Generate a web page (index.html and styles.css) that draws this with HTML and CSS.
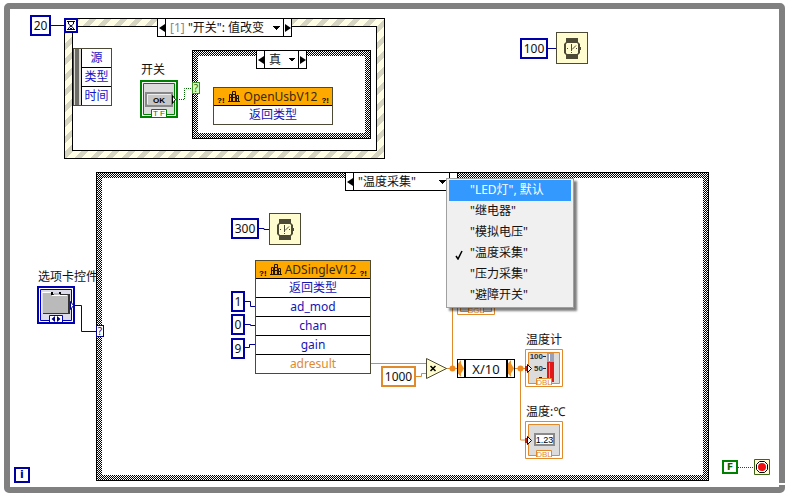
FILE: index.html
```html
<!DOCTYPE html>
<html lang="zh-CN">
<head>
<meta charset="utf-8">
<meta name="viewport" content="width=device-width, initial-scale=1">
<title>程序框图</title>
<link rel="stylesheet" href="styles.css">
</head>
<body>
<svg class="defs" aria-hidden="true">
  <symbol id="watch" viewBox="0 0 30 30">
    <path fill="#4c4a35" d="M9 5h12v21H9z"/>
    <path fill="#4c4a35" d="M9 9h12l2 2v3h1v3h-1v3l-2 2H9l-2-2v-9z"/>
    <path fill="#fffdd0" d="M10 10h10l1 1v9l-1 1H10l-1-1v-9z"/>
    <path fill="none" stroke="#4c4a35" d="M14.500 11v7M15 16.500l4-4M10 15.500h1M19 15.500h1M14 19.500h1"/>
  </symbol>
  <symbol id="library" viewBox="0 0 12 11">
    <path fill="none" stroke="#241600" d="M1.500 10V3.500h2V10M4.500 10V.5h3V10M8.500 10V4.500h2V10M0 10.500h12M1 6.500h3M4 3.500h4M4 6.500h4M8 7.500h3"/>
  </symbol>
</svg>

<main class="diagram">
  <div class="loop"></div>

  <section class="event">
    <div class="event-body"></div>
  </section>
  <div class="selector event-selector">
    <button class="step prev" aria-label="上一个事件"></button>
    <button class="current"><span class="index">[1]</span> "开关": 值改变</button>
    <button class="step next" aria-label="下一个事件"></button>
  </div>
  <ul class="event-data">
    <li>源</li>
    <li>类型</li>
    <li>时间</li>
  </ul>

  <section class="case case-true"><div class="case-body"></div></section>
  <div class="selector true-selector">
    <button class="step prev" aria-label="上一个分支"></button>
    <select class="current" aria-label="条件分支"><option>真</option><option>假</option></select>
    <button class="step next" aria-label="下一个分支"></button>
  </div>

  <section class="case case-tabs"><div class="case-body"></div></section>
  <div class="selector tabs-selector">
    <button class="step prev" aria-label="上一个选项卡"></button>
    <button class="current" aria-haspopup="menu" aria-expanded="true">"温度采集"</button>
    <button class="step next" aria-label="下一个选项卡"></button>
  </div>

  <svg class="wires" aria-hidden="true">
    <g stroke="#00008c">
      <path d="M50 25.500h16M547 48.500h10M258 228.500h6v1h6M72 305.500h9.500v26h16M244 301.500h6.500v5h5M244 324.500h6.500v1h5M244 347.500h5.500v-3h6"/>
    </g>
    <path stroke="#006400" stroke-dasharray="1 1" d="M177 99.500h7.500v-11h9M738 467.500h16"/>
    <g stroke="#e08a2c">
      <path d="M371 363.500h56"/>
      <path d="M414 376.500h7.500v-3h6M446 368.500h12M452.500 368v-62M514 368.500h14M520.500 368v72h7"/>
    </g>
    <g fill="#f08a20"><circle cx="452.500" cy="368.500" r="3"/><circle cx="520.500" cy="368.500" r="3"/></g>
  </svg>

  <span class="tunnel tunnel-true">?</span>
  <span class="tunnel tunnel-tabs">?</span>

  <input class="constant c-20" value="20" aria-label="超时">
  <input class="constant c-100" value="100" aria-label="循环等待">
  <input class="constant c-300" value="300" aria-label="采集等待">
  <input class="constant c-1" value="1" aria-label="ad_mod 值">
  <input class="constant c-0" value="0" aria-label="chan 值">
  <input class="constant c-9" value="9" aria-label="gain 值">
  <input class="constant double c-1000" value="1000" aria-label="系数">

  <svg class="timeout" viewBox="0 0 14 15" aria-hidden="true">
    <path fill="#fff" stroke="#0000a8" stroke-width="2" d="M1 1h12v13H1z"/>
    <path fill="none" stroke="#000040" d="M3 3.500h8M3 11.500h8M4.500 4v2l5 4v1M9.500 4v2l-5 4v1M6 10.500h2"/>
  </svg>
  <svg class="watch watch-loop" aria-hidden="true"><use href="#watch"/></svg>
  <svg class="watch watch-sample" aria-hidden="true"><use href="#watch"/></svg>

  <span class="label l-switch">开关</span>
  <svg class="terminal t-switch" viewBox="0 0 38 38" aria-hidden="true">
    <path fill="#fff" stroke="#008000" stroke-width="2" d="M1 1h36v36H1z"/>
    <path fill="#dcdcdc" stroke="#008000" d="M3.500 3.500h31v31h-31z"/>
    <path fill="#c6c6c6" stroke="#888" stroke-width="2" d="M6 13h26v13H6z"/>
    <path fill="none" stroke="#eee" d="M7.500 24v-9.500H31"/>
    <text class="glyph" x="19" y="23" text-anchor="middle">OK</text>
    <path fill="#fff" stroke="#000" d="M32.500 15.500v8l3-4z"/>
    <path fill="#fff" stroke="#008000" d="M11.500 37V29.500h15V37"/>
    <text class="tag green" x="19" y="36" text-anchor="middle">T F</text>
  </svg>

  <span class="label l-tabs">选项卡控件</span>
  <svg class="terminal t-tabs" viewBox="0 0 38 38" aria-hidden="true">
    <path fill="#fff" stroke="#0000b4" stroke-width="2" d="M1 1h36v36H1z"/>
    <path fill="#dcdcea" stroke="#0000b4" d="M3.500 3.500h31v31h-31z"/>
    <path fill="#333" d="M6 8h27v20H6z"/>
    <path fill="#bababa" d="M5 6h9v3h3V7h6v2h8v18H5z"/>
    <path fill="none" stroke="#fff" d="M5 27V6.500h9M15 9.500h15"/>
    <path fill="#000" d="M14 6h2v3h-2zM22 6h2v2h-2z"/>
    <path fill="#fff" stroke="#000080" d="M33.500 15.500v8l3-4z"/>
    <path fill="#fff" stroke="#0000b4" d="M12.500 36V29.500h13V36"/>
    <path fill="#000080" d="M18 30v6l-3.500-3zM20 30v6l3.500-3z"/>
  </svg>

  <article class="node n-open">
    <h2><span class="error">?!</span><svg class="lib" aria-hidden="true"><use href="#library"/></svg><span class="name">OpenUsbV12</span><span class="error">?!</span></h2>
    <p>返回类型</p>
  </article>

  <article class="node n-adc">
    <h2><span class="error">?!</span><svg class="lib" aria-hidden="true"><use href="#library"/></svg><span class="name">ADSingleV12</span><span class="error">?!</span></h2>
    <p>返回类型</p>
    <p>ad_mod</p>
    <p>chan</p>
    <p>gain</p>
    <p class="out">adresult</p>
  </article>

  <svg class="multiply" viewBox="0 0 22 22" aria-hidden="true">
    <path fill="#fffdd0" stroke="#4c4a35" d="M.5.500v20l20-10z"/>
    <path fill="none" stroke="#000" stroke-width="1.500" d="M4.500 8l5 5M9.500 8l-5 5"/>
  </svg>

  <div class="express">X/10</div>

  <svg class="terminal t-single" viewBox="0 0 38 38" aria-hidden="true">
    <path fill="#fff" stroke="#e08a2c" d="M.5.500h37v37H.5z"/>
    <path fill="#dcdcdc" stroke="#e08a2c" d="M3.500 3.500h31v31h-31z"/>
    <path fill="#fff" stroke="#e08a2c" d="M11.500 36V29.500h15V36"/>
    <text class="tag orange" x="19" y="36" text-anchor="middle">SGL</text>
  </svg>

  <span class="label l-thermo">温度计</span>
  <svg class="terminal t-thermo" viewBox="0 0 38 38" aria-hidden="true">
    <path fill="#fff" stroke="#e08a2c" d="M.5.500h37v37H.5z"/>
    <path fill="#dcdcdc" stroke="#e08a2c" d="M3.500 3.500h31v31h-31z"/>
    <path fill="#9aa0b8" d="M22 4h7v9h-7z"/><path fill="#e01818" d="M22 13h7v20h-7z"/>
    <path stroke="#ff9090" d="M24.500 14v18"/><path stroke="#fff" d="M24.500 5v7"/>
    <text class="scale" x="18" y="10" text-anchor="end">100</text>
    <text class="scale" x="18" y="22" text-anchor="end">50</text>
    <path stroke="#222" d="M18 7.500h3M18 19.500h3M14 28.500h3"/>
    <path fill="#fff" stroke="#e08a2c" d="M11.500 36V29.500h15V36"/>
    <text class="tag orange" x="19" y="36" text-anchor="middle">DBL</text>
    <path fill="#c02010" d="M0 17h3v5H0z"/><path fill="#fff" stroke="#000" d="M2.500 15.500v8l4-4z"/>
  </svg>

  <span class="label l-value">温度:℃</span>
  <svg class="terminal t-value" viewBox="0 0 38 38" aria-hidden="true">
    <path fill="#fff" stroke="#e08a2c" d="M.5.500h37v37H.5z"/>
    <path fill="#dcdcdc" stroke="#e08a2c" d="M3.500 3.500h31v31h-31z"/>
    <path fill="#fff" stroke="#8a8a8a" stroke-width="2" d="M10 13h19v11H10z"/>
    <text class="reading" x="19.500" y="22" text-anchor="middle">1.23</text>
    <path fill="#fff" stroke="#e08a2c" d="M11.500 36V29.500h15V36"/>
    <text class="tag orange" x="19" y="36" text-anchor="middle">DBL</text>
    <path fill="#c02010" d="M0 17h3v5H0z"/><path fill="#fff" stroke="#000" d="M2.500 15.500v8l4-4z"/>
  </svg>

  <span class="iteration">i</span>
  <span class="bool">F</span>
  <svg class="stop" viewBox="0 0 16 16" aria-hidden="true">
    <path fill="#fffdd0" stroke="#3c6414" d="M.5.500h15v15H.5z"/>
    <path fill="#fff" stroke="#000" d="M5.500 2.500h5l3 3v5l-3 3h-5l-3-3v-5z"/>
    <circle cx="8" cy="8" r="4" fill="#f01010"/>
  </svg>

  <div class="menu" role="menu">
    <button role="menuitemradio" aria-checked="false" class="active">"LED灯", 默认</button>
    <button role="menuitemradio" aria-checked="false">"继电器"</button>
    <button role="menuitemradio" aria-checked="false">"模拟电压"</button>
    <button role="menuitemradio" aria-checked="true"><svg class="check" viewBox="0 0 8 10" aria-hidden="true"><path fill="none" stroke="#000" stroke-width="1.500" d="M1 6l2 3 4-8"/></svg>"温度采集"</button>
    <button role="menuitemradio" aria-checked="false">"压力采集"</button>
    <button role="menuitemradio" aria-checked="false">"避障开关"</button>
  </div>
</main>
</body>
</html>
```
FILE: styles.css
```css
* { box-sizing: border-box; }

body {
  margin: 0;
  background: #fff;
  color: #111;
  font: 12px/16px "Noto Sans", "Noto Sans CJK SC", sans-serif;
}

button, input, select { font: inherit; color: inherit; }
h2, p, ul { margin: 0; padding: 0; font: inherit; }
.defs { position: absolute; width: 0; height: 0; }

/* Canvas: every node below has a free position on it. */
.diagram { position: relative; min-height: 100vh; overflow: hidden; }
.diagram > * { position: absolute; }

.loop {
  inset: 3px 3px 4px 4px;
  border: 6px solid #808080;
  border-radius: 5px;
}
/* Gap above the resize corner */
.loop::after {
  content: "";
  position: absolute;
  right: -6px; bottom: 2px;
  width: 6px; height: 2px;
  background: #fff;
}

.wires { left: 0; top: 0; width: 100%; height: 100%; fill: none; }

/* Structures */
.event {
  left: 64px; top: 18px; width: 321px; height: 141px;
  display: flex;
  border: 1px solid #000;
  padding: 7px;
  background: repeating-linear-gradient(135deg, #fffee4 0 6px, #d6d5c2 6px 11px);
}
.event-body { flex: 1; border: 1px solid #000; background: #fff; }

.case {
  display: flex;
  border: 1px solid #000;
  padding: 5px;
  background: repeating-conic-gradient(#000 0 25%, #fff 0 50%) 0 0 / 2px 2px;
}
.case-body { flex: 1; background: #fff; }
.case-true { left: 192px; top: 50px; width: 179px; height: 89px; }
.case-tabs { left: 96px; top: 172px; width: 613px; height: 309px; }

.selector { display: flex; height: 19px; border: 1px solid #000; background: #fff; }
.selector button, .selector select {
  border: 0; margin: 0; padding: 0; background: #fff; border-radius: 0; appearance: none;
}
.step { flex: none; width: 7px; display: grid; place-items: center; }
.step::before { content: ""; border: 4px solid transparent; }
.prev::before { border-left: 0; border-right: 6px solid #000; }
.next::before { border-right: 0; border-left: 6px solid #000; }
.selector .current {
  flex: 1;
  border: solid #000;
  border-width: 0 1px;
  padding: 0 12px 0 4px;
  text-align: left;
  white-space: nowrap;
  background-image: linear-gradient(225deg, #000 50%, transparent 50%), linear-gradient(135deg, #000 50%, transparent 50%);
  background-repeat: no-repeat;
  background-size: 4px 4px;
  background-position: right 6px top 7px, right 2px top 7px;
}
.index { color: #888; }
.event-selector { left: 157px; top: 18px; width: 135px; }
.true-selector { left: 256px; top: 50px; width: 51px; }
.tabs-selector { left: 345px; top: 172px; width: 113px; }

.event-data {
  left: 73px; top: 48px; width: 39px;
  padding-left: 7px;
  border: 1px solid #4c4a35;
  background: linear-gradient(90deg, #dcdcd4 0 1px, #6e6c66 1px 5px, #dcdcd4 5px 7px, #fff 7px);
  list-style: none;
  color: #1414c8;
}
.event-data li { height: 18px; line-height: 18px; text-align: center; border-left: 1px solid #000; }
.event-data li + li, .node p + p { height: 19px; border-top: 1px solid #000; }

.tunnel {
  width: 8px; height: 12px;
  border: 1px solid #00008c;
  background: #fff;
  color: #00008c;
  font-size: 10px; line-height: 10px; text-align: center;
}
.tunnel-true { left: 192px; top: 82px; border-color: #3c8c28; background: #d2ffb4; color: #286414; }
.tunnel-tabs { left: 96px; top: 325px; }

/* Constants */
.constant {
  height: 21px;
  padding: 0;
  border: 2px solid #0000a8;
  border-radius: 0;
  background: #fff;
  text-align: center;
}
.double { border-color: #e08a2c; }
.c-20 { left: 30px; top: 15px; width: 21px; }
.c-100 { left: 520px; top: 38px; width: 28px; }
.c-300 { left: 231px; top: 218px; width: 28px; }
.c-1 { left: 231px; top: 291px; width: 14px; }
.c-0 { left: 231px; top: 314px; width: 14px; }
.c-9 { left: 231px; top: 338px; width: 14px; }
.c-1000 { left: 381px; top: 366px; width: 35px; }

/* Terminals and functions */
.timeout { left: 64px; top: 18px; width: 14px; height: 15px; }
.watch { width: 32px; height: 32px; border: 1px solid #4c4a35; background: #fffdd0; }
.watch-loop { left: 556px; top: 32px; }
.watch-sample { left: 269px; top: 213px; }

.label { white-space: nowrap; }
.l-switch { left: 141px; top: 62px; }
.l-tabs { left: 38px; top: 269px; }
.l-thermo { left: 526px; top: 332px; }
.l-value { left: 526px; top: 404px; }

.terminal { width: 38px; height: 38px; }
.t-switch { left: 140px; top: 80px; }
.t-tabs { left: 37px; top: 286px; }
.t-single { left: 457px; top: 277px; }
.t-thermo { left: 525px; top: 349px; }
.t-value { left: 525px; top: 421px; }
.glyph { font: bold 8px "Liberation Sans", sans-serif; }
.tag { font: 8px "Liberation Sans", sans-serif; }
.scale { font: bold 8px "Liberation Sans", sans-serif; fill: #333; }
.reading { font: 9px "Liberation Sans", sans-serif; }
.green { fill: #008000; }
.orange { fill: #e08a2c; }

.node { border: 1px solid #4c4a35; background: #fff; color: #1414b4; text-align: center; }
.node h2 {
  display: flex; align-items: center;
  height: 18px;
  padding: 0 3px;
  border-bottom: 1px solid #000;
  background: #fda900;
  color: #3a2800;
}
.node p { height: 18px; line-height: 18px; }
.node .out { color: #e08a2c; }
.n-open { left: 213px; top: 87px; width: 120px; }
.n-adc { left: 255px; top: 260px; width: 116px; }
.name { flex: 1; }
.error { align-self: flex-end; color: #000; font: bold 8px/8px "Liberation Sans", sans-serif; }
.lib { flex: none; width: 12px; height: 11px; margin-left: 3px; }

.multiply { left: 426px; top: 358px; width: 22px; height: 22px; }
.express {
  left: 457px; top: 359px; width: 58px; height: 19px;
  display: flex; align-items: center; justify-content: space-between;
  border: 1px solid #000;
  background: linear-gradient(#000, #000) 6px 0 / 2px 100% no-repeat, linear-gradient(#000, #000) 48px 0 / 2px 100% no-repeat, #fff;
  font-size: 13px;
}
.express::before, .express::after {
  content: "";
  width: 6px; height: 17px;
  background: #f09020;
  clip-path: polygon(0 20%, 50% 0, 50% 20%, 100% 50%, 50% 80%, 50% 100%, 0 80%);
}

.iteration, .bool { width: 16px; height: 16px; border: 2px solid #0000a0; color: #0000a0; font: bold 11px/12px "DejaVu Sans", sans-serif; text-align: center; }
.iteration { left: 14px; top: 467px; }
.bool { left: 722px; top: 460px; height: 14px; border-color: #008000; color: #006400; font-size: 9px; line-height: 10px; }
.stop { left: 754px; top: 459px; width: 16px; height: 16px; }

/* Drop-down of the tab case */
.menu {
  left: 446px; top: 178px; width: 128px;
  padding: 1px 2px;
  border: 1px solid #a0a0a0;
  background: #f0f0f0;
  box-shadow: 3px 3px 2px rgba(0, 0, 0, .5);
}
.menu button {
  display: block; position: relative;
  width: 100%; height: 21px;
  padding: 0 0 1px 21px;
  border: 0;
  background: none;
  text-align: left;
}
.menu .active { background: #3399ff; color: #fff; }
.check { position: absolute; left: 6px; top: 7px; width: 8px; height: 10px; }
```
